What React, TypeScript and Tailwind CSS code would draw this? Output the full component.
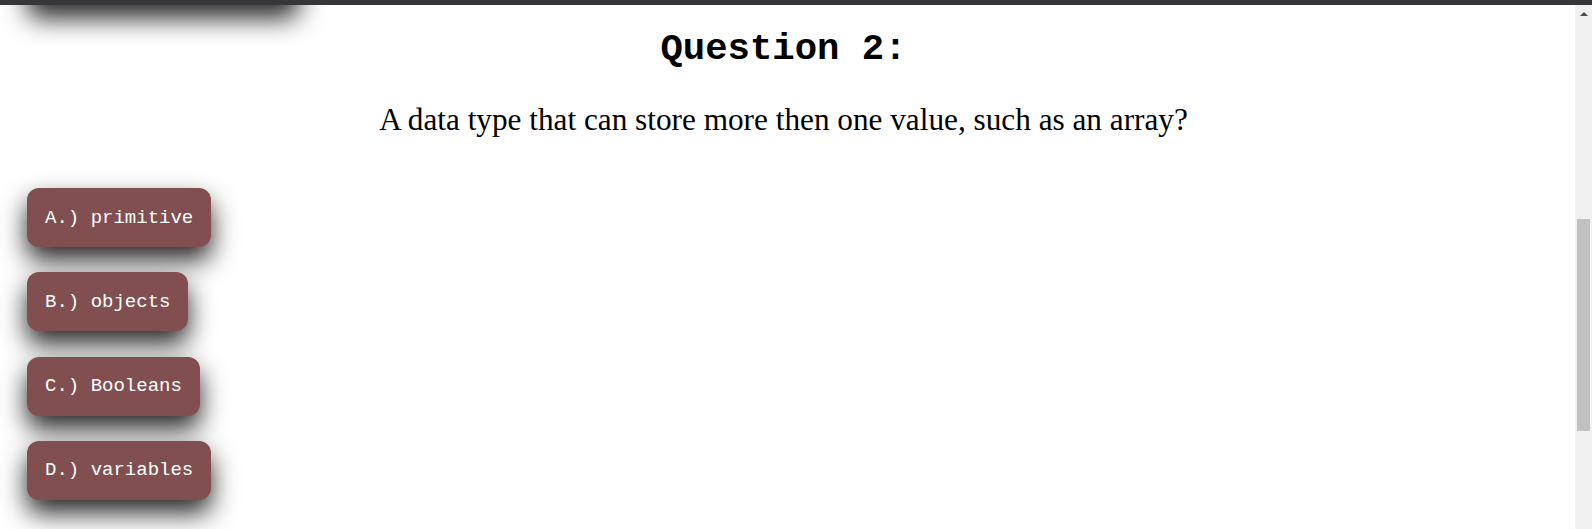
const options = [
  { key: "A", label: "primitive" },
  { key: "B", label: "objects" },
  { key: "C", label: "Booleans" },
  { key: "D", label: "variables" }
];

function Scrollbar() {
  return (
    <div className="flex w-[17px] shrink-0 flex-col items-center bg-[#f1f1f1]">
      <div className="mt-[7px] h-0 w-0 border-x-[4px] border-b-[4px] border-x-transparent border-b-[#505050]" />
      <div className="mt-[203px] h-[212px] w-[13px] bg-[#c1c1c1]" />
    </div>
  );
}

export default function App() {
  return (
    <div className="flex h-[529px] w-full flex-col overflow-hidden bg-white">
      <div className="relative z-10 h-[5px] shrink-0 bg-[#35363a]" />
      <div className="flex min-h-0 flex-1">
        <main className="flex flex-1 flex-col pr-[8px]">
          {/* button scrolled out of view above */}
          <div className="-mt-[50px] ml-[27px] h-[50px] w-[272px] rounded-[12px] bg-[#814f4f] shadow-[0_13px_26px_rgba(0,0,0,0.85)]" />
          <h1 className="mt-[22px] text-center font-['Liberation_Mono','Courier_New',monospace] text-[37.3px] leading-[44px] font-bold text-black">
            Question 2:
          </h1>
          <p className="mt-[31.5px] text-center font-['Liberation_Serif','Times_New_Roman',serif] text-[31.25px] leading-[34px] text-black">
            A data type that can store more then one value, such as an array?
          </p>
          <div className="mt-[51.5px] flex flex-col items-start gap-[25.3px] pl-[27px]">
            {options.map((opt) => (
              <button
                key={opt.key}
                className="flex h-[59px] items-center rounded-[12px] bg-[#814f4f] px-[18px] font-['Liberation_Mono','Courier_New',monospace] text-[19px] leading-[22px] whitespace-pre text-white shadow-[0_13px_26px_rgba(0,0,0,0.85)]"
              >
                {opt.key}.) {opt.label}
              </button>
            ))}
          </div>
        </main>
        <Scrollbar />
      </div>
    </div>
  );
}
